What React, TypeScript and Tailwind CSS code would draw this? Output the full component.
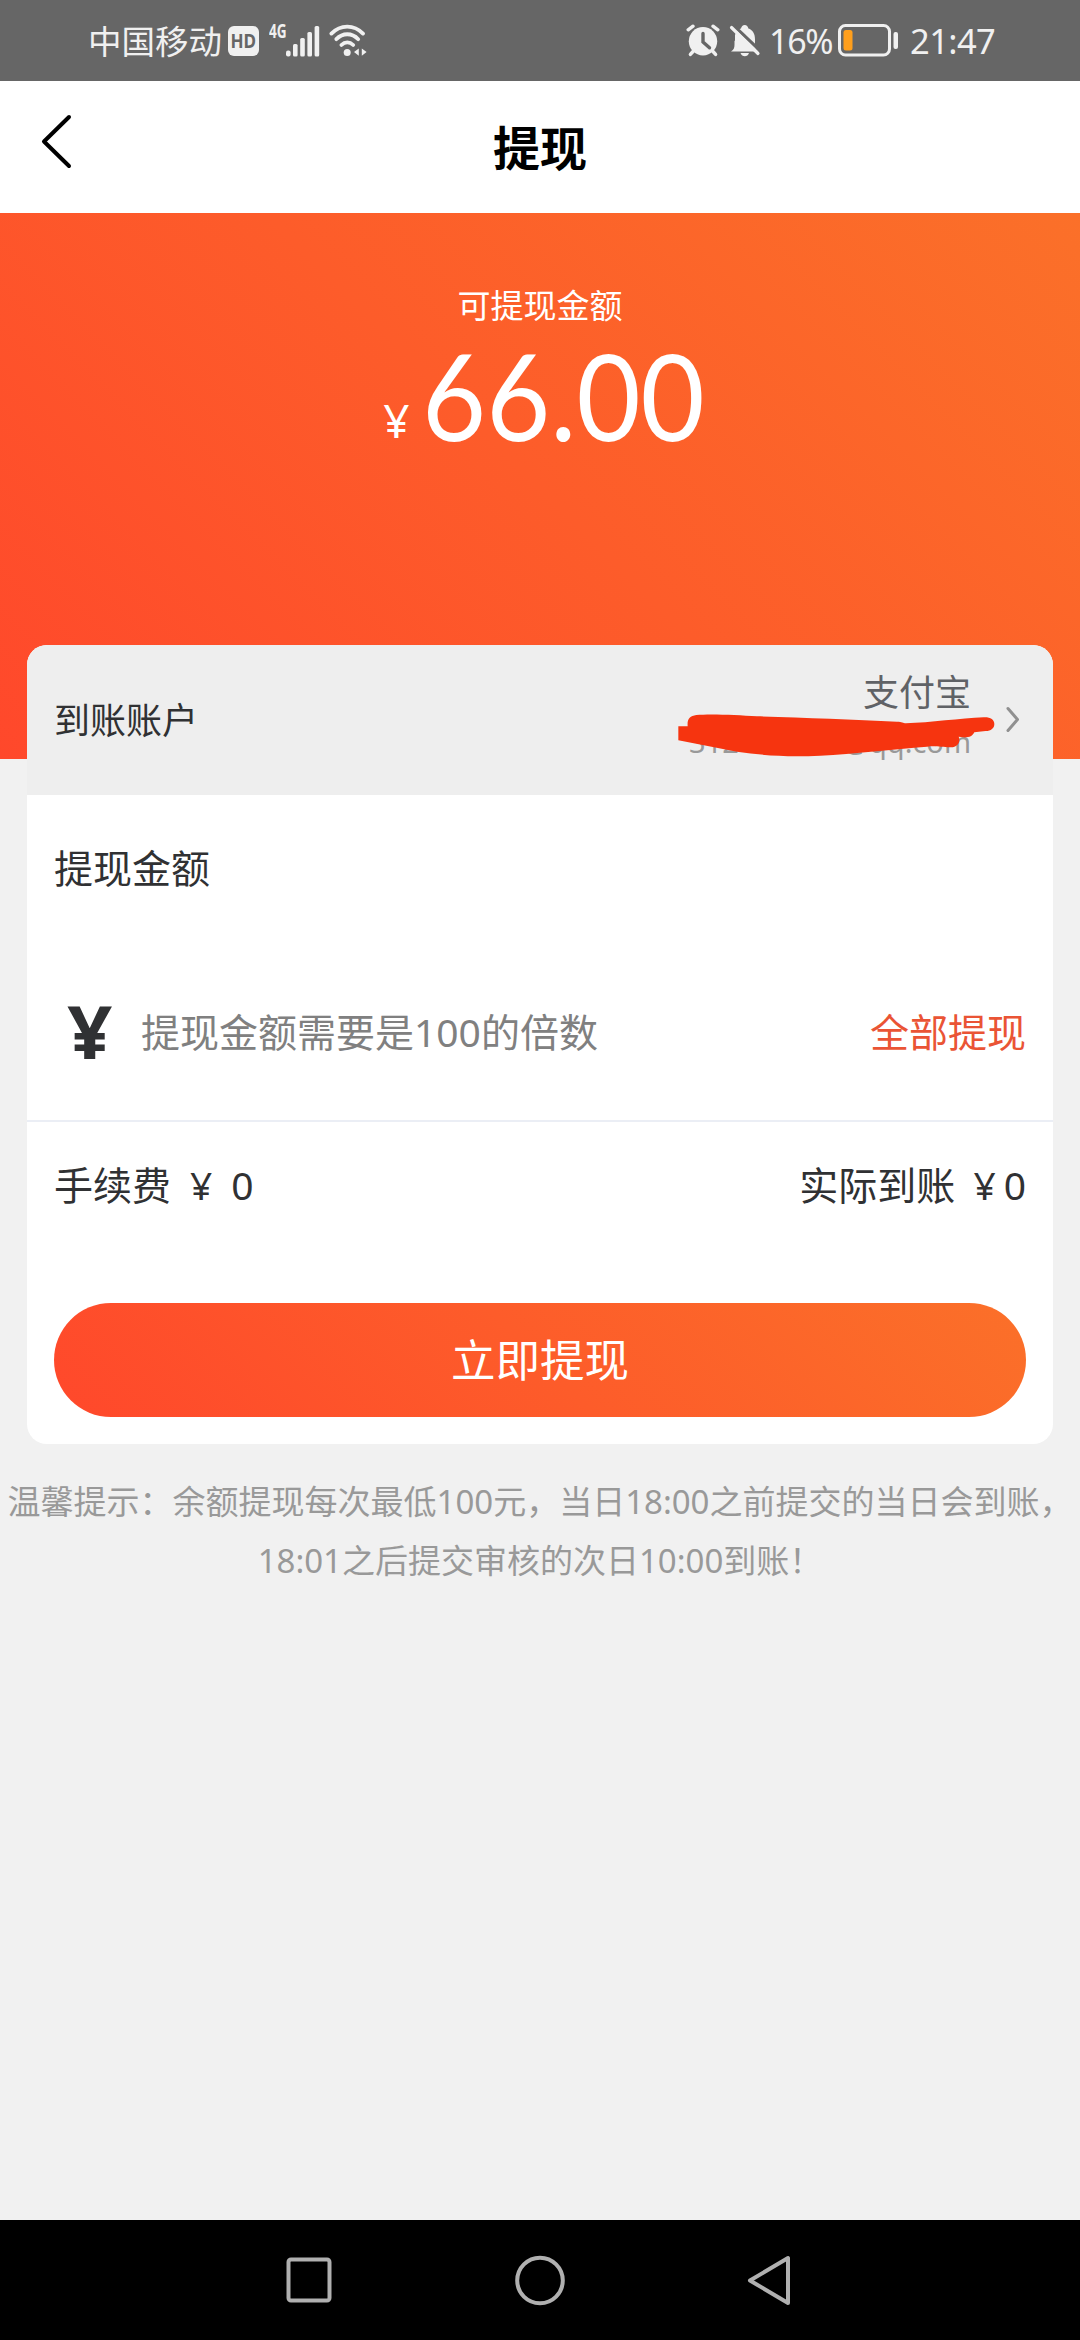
import { ReactNode } from "react";

/* ===== Status bar icons ===== */
const SignalIcon = () => (
  <svg width="34" height="32" viewBox="0 0 34 32" fill="#f0f0f0">
    <rect x="0" y="25.5" width="4.6" height="6" rx="2" />
    <rect x="7" y="19" width="4.6" height="12.5" rx="1.5" />
    <rect x="14.2" y="13" width="4.6" height="18.5" rx="1.5" />
    <rect x="21.4" y="7" width="4.6" height="24.5" rx="1.5" />
    <rect x="28.6" y="1" width="4.6" height="30.5" rx="1.5" />
  </svg>
);

const WifiIcon = () => (
  <svg width="38" height="34" viewBox="0 0 38 34" fill="none">
    <g stroke="#f0f0f0" strokeWidth="3.8" strokeLinecap="round">
      <path d="M2.4 9.6C11.5 0.2 25 0.2 34 9.6" />
      <path d="M7.3 15.2C13.8 8.6 22.8 8.6 29.2 15.2" />
      <path d="M12.4 21C16 17.4 20.6 17.4 24.2 21" />
    </g>
    <circle cx="18.2" cy="28.4" r="3.5" fill="#f0f0f0" />
    <path d="M29.8 24.4v7.4l-4.8-3.7zM32.8 24.4v7.4l4.8-3.7z" fill="#f0f0f0" />
  </svg>
);

const AlarmIcon = () => (
  <svg width="34" height="33" viewBox="0 0 34 33" fill="none">
    <g stroke="#f0f0f0" strokeWidth="3.4" strokeLinecap="round">
      <path d="M2.2 5.8L7 2.2M31.8 5.8L27 2.2" />
      <path d="M7 27.5L4.4 30.4M27 27.5l2.6 2.9" />
    </g>
    <circle cx="17" cy="17.2" r="14.2" fill="#f0f0f0" />
    <path d="M17 9.5V18l6.5 5.8" stroke="#666" strokeWidth="3.4" strokeLinecap="round" />
  </svg>
);

const MutedBellIcon = () => (
  <svg width="32" height="33" viewBox="0 0 32 33" fill="none">
    <path
      d="M2 27.5c3-1.8 3.5-4 3.5-7v-5C5.5 9.5 8 6 12 4.6 12.3 2.5 13.8 1 15.7 1s3.4 1.5 3.7 3.6C23.5 6 26 9.5 26 15.5v5c0 3 .5 5.2 3.5 7z"
      fill="#f0f0f0"
    />
    <path d="M11.5 29h8.5c-.8 2.2-2.3 3.2-4.2 3.2s-3.5-1-4.3-3.2z" fill="#f0f0f0" />
    <path d="M4 1l28 26.5" stroke="#666" strokeWidth="3.2" />
    <path d="M0 0v14l6 3V8z" fill="#666" />
    <path d="M2.5 3.5L29 29.5" stroke="#f0f0f0" strokeWidth="3.2" strokeLinecap="round" />
  </svg>
);

const BatteryIcon = () => (
  <svg width="61" height="33" viewBox="0 0 61 33" fill="none">
    <rect x="1.5" y="1.5" width="50" height="29.5" rx="6" stroke="#f0f0f0" strokeWidth="3" />
    <rect x="5.5" y="6" width="9" height="20.5" rx="2.5" fill="#ff9f1c" />
    <rect x="55.5" y="8" width="4.5" height="17" rx="2" fill="#f0f0f0" />
  </svg>
);

function StatusBar() {
  return (
    <div className="flex h-[81px] shrink-0 items-center bg-[#666666] pl-[88px] pr-[87px] text-[#f0f0f0]">
      <span className="w-[134px] text-[33.5px] leading-[48px]">中国移动</span>
      <span className="ml-1.5 mt-px flex h-[30px] w-[31px] items-center justify-center rounded-[6px] bg-[#f0f0f0]">
        <span className="scale-x-90 text-[19px] font-bold leading-[30px] text-[#666666]">HD</span>
      </span>
      <span className="-mt-[19px] ml-[10px] w-[17px] origin-left scale-x-[.68] text-[20px] font-bold leading-[20px]">
        4G
      </span>
      <SignalIcon />
      <span className="ml-[9px]">
        <WifiIcon />
      </span>
      <span className="ml-auto flex items-center">
        <AlarmIcon />
        <span className="ml-[9px]">
          <MutedBellIcon />
        </span>
        <span className="ml-[8px] w-[69px] text-[34px] leading-[48px] tracking-[-1.3px]">16%</span>
        <BatteryIcon />
        <span className="ml-[11px] w-[83px] text-[34.5px] leading-[48px] tracking-[-0.6px]">21:47</span>
      </span>
    </div>
  );
}

/* ===== Title bar ===== */
function Header() {
  return (
    <div className="grid h-[132px] shrink-0 grid-cols-[1fr_auto_1fr] items-center bg-white">
      <svg className="-mt-3 ml-[40px]" width="34" height="56" viewBox="0 0 34 56" fill="none">
        <path d="M29 4L4 28.5 29 53" stroke="#000" strokeWidth="4" strokeLinecap="round" strokeLinejoin="round" />
      </svg>
      <h1 className="pt-0.5 text-[47px] font-bold leading-[60px] text-black">提现</h1>
    </div>
  );
}

function Row({ children, className }: { children: ReactNode; className: string }) {
  return <div className={`flex items-center justify-between px-[27px] ${className}`}>{children}</div>;
}

/* ===== Payout account ===== */
function Account() {
  return (
    <Row className="relative h-[150px] rounded-t-[20px] bg-[#eeeeee]">
      <span className="pt-0.5 text-[36px] leading-[48px] text-[#303133]">到账账户</span>
      <div className="flex items-center">
        <div className="-mt-[7px] mr-[34px] flex w-[282px] flex-col items-end">
          <span className="text-[36px] leading-[50px] text-[#606266]">支付宝</span>
          <span className="flex w-full justify-between text-[29px] leading-[48px] text-[#999999]">
            <span>312</span>
            <span>@qq.com</span>
          </span>
        </div>
        <svg className="-mt-0.5 mr-[6px]" width="15" height="27" viewBox="0 0 15 27" fill="none">
          <path d="M3 2.5L12.5 13.5 3 24.5" stroke="#909090" strokeWidth="3" strokeLinecap="round" strokeLinejoin="round" />
        </svg>
      </div>
      {/* marker stroke over the account name */}
      <svg className="absolute left-[650px] top-[67px]" width="320" height="47" viewBox="110 245 960 141">
        <path
          d="M114 288H142C140 266 148 257 168 254C210 250 290 254 350 258C480 262 640 268 770 274C785 274 788 278 797 279C870 277 960 264 1030 261C1050 260 1062 268 1062 281C1062 294 1052 302 1036 302L1002 306C996 318 986 322 968 321L955 319C962 334 952 350 932 351C900 351 890 346 860 349C760 356 640 371 540 376C440 380 370 376 290 364L114 330Z"
          fill="#f6340f"
        />
      </svg>
    </Row>
  );
}

function WithdrawCard() {
  return (
    <div className="relative mx-[27px] -mt-[114px] h-[799px] rounded-[20px] bg-white text-[39px] text-[#303133]">
      <Account />
      <Row className="h-[147px]">
        <span className="-mt-px leading-[60px]">提现金额</span>
      </Row>
      <Row className="h-[180px] border-b-2 border-[#ebeef5]">
        <div className="flex items-center">
          <span className="w-[87px] pl-[15px] text-[73px] font-bold leading-[80px]">
            <span className="inline-block scale-x-108">¥</span>
          </span>
          <span className="pt-0.5 leading-[60px] text-[#808080]">提现金额需要是100的倍数</span>
        </div>
        <span className="pt-0.5 leading-[60px] text-[#ea5435]">全部提现</span>
      </Row>
      <Row className="h-[126px]">
        <span className="leading-[60px]">
          手续费<span className="ml-[19px]">¥</span>
          <span className="ml-[19px]">0</span>
        </span>
        <span className="leading-[60px]">
          实际到账<span className="ml-[18px]">¥</span>
          <span className="ml-[8px]">0</span>
        </span>
      </Row>
      <div className="px-[27px] pt-[55px]">
        <button className="block h-[114px] w-full rounded-full bg-[linear-gradient(45deg,#ff482b,#fb7029)] text-[44.5px] leading-[114px] text-white">
          立即提现
        </button>
      </div>
    </div>
  );
}

/* ===== System navigation ===== */
function NavBar() {
  return (
    <div className="mt-auto flex h-[120px] shrink-0 items-center justify-center gap-[179px] bg-black">
      <svg width="52" height="52" viewBox="0 0 52 52" fill="none" stroke="#b0b0b0" strokeWidth="4">
        <rect x="5.5" y="5.5" width="41" height="41" rx="2.5" />
      </svg>
      <svg width="52" height="52" viewBox="0 0 52 52" fill="none" stroke="#b0b0b0" strokeWidth="4">
        <circle cx="26" cy="26.5" r="22.8" />
      </svg>
      <svg width="52" height="52" viewBox="0 0 52 52" fill="none" stroke="#b0b0b0" strokeWidth="4" strokeLinejoin="round">
        <path d="M43 4v45L5 26.5z" />
      </svg>
    </div>
  );
}

export default function App() {
  return (
    <div className="flex h-[2340px] w-[1080px] flex-col overflow-hidden bg-[#f1f1f1] font-['Noto_Sans','Noto_Sans_CJK_SC',sans-serif]">
      <StatusBar />
      <Header />

      <div className="h-[546px] shrink-0 bg-[linear-gradient(45deg,#ff482b,#fb7029)] pt-[69px] text-center text-white">
        <div className="text-[33px] leading-[48px]">可提现金额</div>
        <div className="flex items-baseline justify-center pl-[7px] leading-[130px]">
          <span className="mr-[12px] -translate-y-[3px] text-[46px]">¥</span>
          <span className="w-[282px] origin-left scale-x-[.922] whitespace-nowrap text-left font-['Lato',sans-serif] text-[120px]">
            66.00
          </span>
        </div>
      </div>

      <WithdrawCard />

      <div className="mt-[28px] whitespace-nowrap text-center text-[33px] leading-[59px] text-[#999999]">
        <p>温馨提示：余额提现每次最低100元，当日18:00之前提交的当日会到账，</p>
        <p>18:01之后提交审核的次日10:00到账！</p>
      </div>

      <NavBar />
    </div>
  );
}
